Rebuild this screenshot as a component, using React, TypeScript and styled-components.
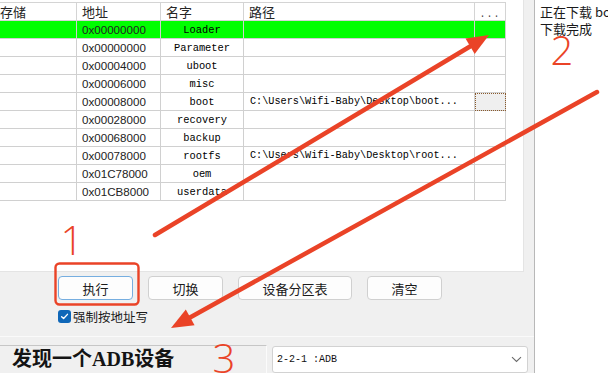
import React from "react";
import styled, { createGlobalStyle } from "styled-components";

const GlobalStyle = createGlobalStyle`
  html, body { margin: 0; padding: 0; background: #fff; }
  body { font-family: "Noto Sans CJK SC", "Liberation Sans", sans-serif; }
`;

type Part = { addr: string; name: string; path?: string; active?: boolean; focused?: boolean };

const parts: Part[] = [
    { addr: "0x00000000", name: "Loader", active: true },
    { addr: "0x00000000", name: "Parameter" },
    { addr: "0x00004000", name: "uboot" },
    { addr: "0x00006000", name: "misc" },
    { addr: "0x00008000", name: "boot", path: "C:\\Users\\Wifi-Baby\\Desktop\\boot...", focused: true },
    { addr: "0x00028000", name: "recovery" },
    { addr: "0x00068000", name: "backup" },
    { addr: "0x00078000", name: "rootfs", path: "C:\\Users\\Wifi-Baby\\Desktop\\root..." },
    { addr: "0x01C78000", name: "oem" },
    { addr: "0x01CB8000", name: "userdata" },
];

const RED = "#ea4327";

export default function App() {
    return (
        <>
            <GlobalStyle />
            <Screen>
                <MainPane>
                    <TableArea>
                        <HeaderRow>
                            <HeadCell $pad={0}>存储</HeadCell>
                            <HeadCell>地址</HeadCell>
                            <HeadCell>名字</HeadCell>
                            <HeadCell>路径</HeadCell>
                            <HeadCell $dots>...</HeadCell>
                        </HeaderRow>
                        {parts.map((p, i) => (
                            <Row key={i} $active={p.active}>
                                <Cell />
                                <AddrCell>{p.addr}</AddrCell>
                                <NameCell>{p.name}</NameCell>
                                <PathCell>{p.path}</PathCell>
                                <Cell $focused={p.focused} />
                            </Row>
                        ))}
                    </TableArea>

                    <ButtonRow>
                        <Button $width={75} $default>执行</Button>
                        <Button $width={75}>切换</Button>
                        <Button $width={114}>设备分区表</Button>
                        <Button $width={75}>清空</Button>
                    </ButtonRow>

                    <CheckRow>
                        <CheckBox>
                            <svg width="9" height="9" viewBox="0 0 10 10">
                                <path d="M1.8 5.2 L4 7.3 L8.3 2.6" fill="none" stroke="#fff" strokeWidth="1.5" strokeLinecap="round" strokeLinejoin="round" />
                            </svg>
                        </CheckBox>
                        <CheckLabel>强制按地址写</CheckLabel>
                    </CheckRow>

                    <Divider />

                    <StatusBar>
                        <StatusBox>发现一个ADB设备</StatusBox>
                        <Combo>
                            <span>2-2-1 :ADB</span>
                            <svg width="11" height="7" viewBox="0 0 11 7">
                                <path d="M1 1.2 L5.5 5.5 L10 1.2" fill="none" stroke="#6b6b6b" strokeWidth="1.1" />
                            </svg>
                        </Combo>
                    </StatusBar>
                </MainPane>

                <LogPane>
                    <LogLine>正在下载 boot.img</LogLine>
                    <LogLine>下载完成</LogLine>
                </LogPane>

                <Overlay viewBox="0 0 608 373">
                    <rect x="55.5" y="263.5" width="83" height="41" rx="4" fill="none" stroke={RED} strokeWidth="2.4" />
                    <line x1="155" y1="235" x2="470" y2="46.5" stroke={RED} strokeWidth="4.5" strokeLinecap="round" />
                    <polygon points="489,35 474.7,54 465.5,38.6" fill={RED} />
                    <line x1="597" y1="92" x2="190" y2="317.5" stroke={RED} strokeWidth="4.5" strokeLinecap="round" />
                    <polygon points="171,328 194.6,325.2 185.8,309.4" fill={RED} />
                    <Digit x="72" y="255">1</Digit>
                    <Digit x="562" y="65">2</Digit>
                    <Digit x="224" y="373">3</Digit>
                </Overlay>
            </Screen>
        </>
    );
}

const Screen = styled.div`
    position: relative;
    width: 608px;
    height: 373px;
    overflow: hidden;
    display: flex;
    background: #fff;
`;

const MainPane = styled.div`
    width: 534px;
    flex: none;
    display: flex;
    flex-direction: column;
    background: #f0f0f0;
    border-right: 1px solid #b8b8b8;
`;

const TableArea = styled.div`
    width: 524px;
    height: 272px;
    flex: none;
    box-sizing: border-box;
    padding-top: 2px;
    background: #fff;
    border-right: 1px solid #e4e4e4;
    border-bottom: 1px solid #e4e4e4;
`;

const GridRow = styled.div`
    display: grid;
    grid-template-columns: 77px 84px 83px 231px 31px;
    width: 506px;
`;

const HeaderRow = styled(GridRow)`
    height: 19px;
    box-sizing: border-box;
    border-top: 1px solid #d4d4d4;
`;

const Row = styled(GridRow)<{ $active?: boolean }>`
    height: 18px;
    background: ${(p) => (p.$active ? "#00ff00" : "#fff")};
`;

const HeadCell = styled.div<{ $pad?: number; $dots?: boolean }>`
    box-sizing: border-box;
    border-right: 1px solid #d4d4d4;
    border-bottom: 1px solid #d4d4d4;
    padding-left: ${(p) => (p.$pad ?? 5)}px;
    font-size: 13px;
    line-height: 17px;
    color: #262626;
    white-space: nowrap;
    overflow: hidden;
    ${(p) =>
        p.$dots &&
        `
        font-family: "Liberation Mono", monospace;
        font-size: 10px;
        letter-spacing: 1px;
        text-align: center;
        padding-left: 0;
        line-height: 23px;
        color: #444;
    `}
`;

const Cell = styled.div<{ $focused?: boolean }>`
    box-sizing: border-box;
    border-right: 1px solid #d0d0d0;
    border-bottom: 1px solid #d0d0d0;
    white-space: nowrap;
    overflow: hidden;
    line-height: 18px;
    color: #000;
    ${(p) =>
        p.$focused &&
        `
        background: #efefef;
        outline: 1px dotted #8a5a2c;
        outline-offset: -1px;
    `}
`;

const AddrCell = styled(Cell)`
    padding-left: 5px;
    font-family: "Liberation Sans", Arial, sans-serif;
    font-size: 11.6px;
    line-height: 17px;
    color: #222;
`;

const NameCell = styled(Cell)`
    text-align: center;
    font-family: "Liberation Mono", monospace;
    font-size: 10.4px;
`;

const PathCell = styled(Cell)`
    padding-left: 6px;
    font-family: "Liberation Mono", monospace;
    font-size: 10.2px;
`;

const ButtonRow = styled.div`
    display: flex;
    gap: 15px;
    padding: 4px 0 0 58px;
`;

const Button = styled.button<{ $width: number; $default?: boolean }>`
    width: ${(p) => p.$width}px;
    height: 24px;
    padding: 0;
    border: 1px solid ${(p) => (p.$default ? "#76aee0" : "#d0d0d0")};
    border-radius: 4px;
    background: #fdfdfd;
    font-family: "Noto Sans CJK SC", sans-serif;
    font-size: 13px;
    color: #1b1b1b;
`;

const CheckRow = styled.div`
    display: flex;
    align-items: center;
    gap: 2px;
    margin-top: 10px;
    padding-left: 58px;
    height: 13px;
`;

const CheckBox = styled.span`
    width: 13px;
    height: 13px;
    box-sizing: border-box;
    border-radius: 3px;
    background: #0f67b8;
    display: flex;
    align-items: center;
    justify-content: center;
`;

const CheckLabel = styled.span`
    font-size: 12.5px;
    color: #1a1a1a;
    line-height: 13px;
`;

const Divider = styled.div`
    margin-top: 13px;
    height: 0;
    border-top: 1px solid #fafafa;
`;

const StatusBar = styled.div`
    display: flex;
    align-items: flex-start;
    gap: 5px;
    padding-top: 8px;
`;

const StatusBox = styled.div`
    width: 267px;
    height: 28px;
    box-sizing: border-box;
    border-top: 1px solid #c6c6c6;
    border-right: 1px solid #fbfbfb;
    padding-left: 12px;
    font-family: "Liberation Serif", "Noto Sans CJK SC", serif;
    font-weight: bold;
    font-size: 20px;
    line-height: 27px;
    color: #141414;
    white-space: nowrap;
`;

const Combo = styled.div`
    width: 256px;
    height: 27px;
    margin-top: 1px;
    box-sizing: border-box;
    display: flex;
    align-items: center;
    justify-content: space-between;
    padding: 0 5px 0 4px;
    background: #fff;
    border: 1px solid #d2d2d2;
    border-radius: 3px;
    font-family: "Liberation Mono", monospace;
    font-size: 10px;
    color: #111;
`;

const LogPane = styled.div`
    flex: 1;
    min-width: 0;
    padding: 3px 0 0 5px;
    background: #fff;
    overflow: hidden;
`;

const LogLine = styled.div`
    font-size: 13px;
    line-height: 17px;
    color: #1a1a1a;
    white-space: nowrap;
`;

const Overlay = styled.svg`
    position: absolute;
    left: 0;
    top: 0;
    width: 608px;
    height: 373px;
    pointer-events: none;
`;

const Digit = styled.text`
    font-family: "Open Sans", "Noto Sans", sans-serif;
    font-weight: 300;
    font-size: 40px;
    fill: ${RED};
    text-anchor: middle;
`;
